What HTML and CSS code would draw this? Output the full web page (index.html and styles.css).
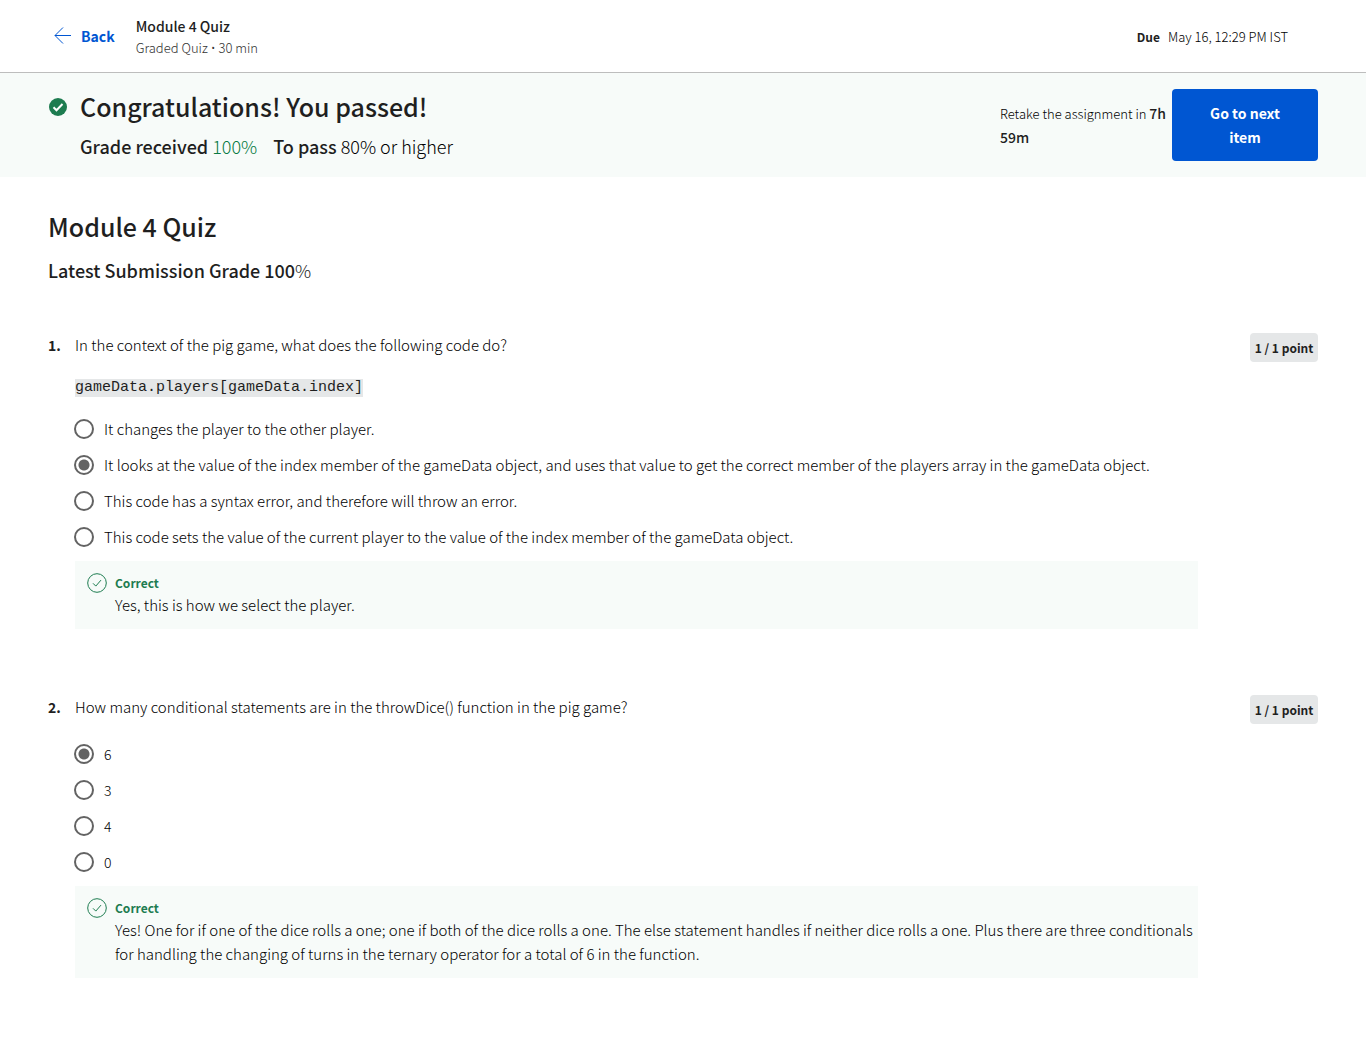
FILE: index.html
```html
<!DOCTYPE html>
<html lang="en">
<head>
<meta charset="utf-8">
<meta name="viewport" content="width=device-width, initial-scale=1">
<title>Module 4 Quiz</title>
<link rel="stylesheet" href="styles.css">
</head>
<body>
<header class="topbar">
  <a class="back" href="#">
    <svg class="back-icon" viewBox="0 0 18 18" aria-hidden="true"><path d="M17 8.5H1M9 .5l-8 8 8 8"/></svg>
    <span>Back</span>
  </a>
  <div class="item-info">
    <div class="item-title">Module 4 Quiz</div>
    <div class="item-meta">Graded Quiz <span class="bullet">•</span> 30 min</div>
  </div>
  <div class="due"><b>Due</b><span>May 16, 12:29 PM IST</span></div>
</header>

<section class="banner">
  <svg class="passed-icon" viewBox="0 0 18 18" aria-hidden="true"><circle cx="9" cy="9" r="9"/><path d="M4.5 9.2l3 3 6-6.2"/></svg>
  <div class="result">
    <h2 class="result-title">Congratulations! You passed!</h2>
    <div class="grades">
      <span><b>Grade received</b> <span class="score">100%</span></span>
      <span><b>To pass</b> 80% or higher</span>
    </div>
  </div>
  <p class="retake">Retake the assignment in <b>7h 59m</b></p>
  <button class="next" type="button">Go to next item</button>
</section>

<main class="quiz">
  <h1 class="quiz-title">Module 4 Quiz</h1>
  <h2 class="quiz-grade">Latest Submission Grade 100<span class="percent">%</span></h2>

  <section class="question">
    <div class="number">1.</div>
    <div class="body">
      <fieldset class="choices">
        <legend class="prompt">In the context of the pig game, what does the following code do?</legend>
        <p class="snippet"><code>gameData.players[gameData.index]</code></p>
        <label class="choice"><input type="radio" name="q1"><span>It changes the player to the other player.</span></label>
        <label class="choice"><input type="radio" name="q1" checked><span>It looks at the value of the index member of the gameData object, and uses that value to get the correct member of the players array in the gameData object.</span></label>
        <label class="choice"><input type="radio" name="q1"><span>This code has a syntax error, and therefore will throw an error.</span></label>
        <label class="choice"><input type="radio" name="q1"><span>This code sets the value of the current player to the value of the index member of the gameData object.</span></label>
      </fieldset>
      <div class="feedback">
        <svg class="correct-icon" viewBox="0 0 20 20" aria-hidden="true"><circle cx="10" cy="10" r="9.3"/><path d="M6 10.3l2.8 2.8 5.2-6"/></svg>
        <div>
          <div class="verdict">Correct</div>
          <p class="explanation">Yes, this is how we select the player.</p>
        </div>
      </div>
    </div>
    <div class="points">1 / 1 point</div>
  </section>

  <section class="question">
    <div class="number">2.</div>
    <div class="body">
      <fieldset class="choices">
        <legend class="prompt">How many conditional statements are in the throwDice() function in the pig game?</legend>
        <label class="choice"><input type="radio" name="q2" checked><span class="short">6</span></label>
        <label class="choice"><input type="radio" name="q2"><span class="short">3</span></label>
        <label class="choice"><input type="radio" name="q2"><span class="short">4</span></label>
        <label class="choice"><input type="radio" name="q2"><span class="short">0</span></label>
      </fieldset>
      <div class="feedback">
        <svg class="correct-icon" viewBox="0 0 20 20" aria-hidden="true"><circle cx="10" cy="10" r="9.3"/><path d="M6 10.3l2.8 2.8 5.2-6"/></svg>
        <div>
          <div class="verdict">Correct</div>
          <p class="explanation">Yes! One for if one of the dice rolls a one; one if both of the dice rolls a one. The else statement handles if neither dice rolls a one. Plus there are three conditionals for handling the changing of turns in the ternary operator for a total of 6 in the function.</p>
        </div>
      </div>
    </div>
    <div class="points">1 / 1 point</div>
  </section>
</main>
</body>
</html>
```

FILE: styles.css
```css
* { box-sizing: border-box; }

body {
  margin: 0;
  background: #fff;
  color: #1f1f1f;
  font: 300 15px/24px "Noto Sans CJK SC", "Noto Sans", sans-serif;
}

h1, h2, p { margin: 0; }

.topbar {
  display: flex;
  align-items: center;
  height: 73px;
  padding: 2px 78px 0 54px;
  border-bottom: 1px solid #bdbdbd;
}

.back {
  display: flex;
  align-items: center;
  gap: 9px;
  margin-right: 21px;
  padding-bottom: 2px;
  color: #0056d2;
  font-size: 14px;
  font-weight: 700;
  text-decoration: none;
}
.back-icon {
  width: 18px;
  height: 18px;
  fill: none;
  stroke: #0056d2;
}

.item-title { font-size: 14px; font-weight: 500; line-height: 22px; }
.item-meta { color: #333; font-size: 13px; line-height: 22px; }
.bullet { font-family: "Open Sans", sans-serif; }

.due {
  display: flex;
  gap: 8px;
  margin-left: auto;
  color: #000;
  font-size: 13px;
}
.due b { color: #1f1f1f; font-size: 12px; font-weight: 700; }

.banner {
  display: flex;
  align-items: flex-start;
  padding: 16px 48px;
  background: #f7fbf9;
}
.passed-icon {
  width: 20px;
  height: 18px;
  margin: 9px 12px 0 0;
  fill: #1d7c50;
}
.passed-icon path { fill: none; stroke: #fff; stroke-width: 2; }
.result { flex: 1; }
.result-title { font-size: 25px; font-weight: 500; line-height: 34px; }
.grades {
  display: flex;
  gap: 16px;
  margin-top: 9px;
  color: #000;
  font-size: 18px;
  line-height: 28px;
}
.grades b { color: #1f1f1f; font-weight: 500; }
.grades .score { color: #087a43; }
.retake { width: 172px; padding-top: 13px; color: #000; font-size: 13px; }
.retake b { color: #1f1f1f; font-size: 14px; font-weight: 500; line-height: 20px; }
.next {
  width: 146px;
  padding: 12px 32px;
  border: 0;
  border-radius: 4px;
  background: #0056d2;
  color: #fff;
  font: inherit;
  font-size: 14px;
  font-weight: 700;
}

.quiz { padding: 32px 48px; }
.quiz-title { font-size: 25px; font-weight: 500; line-height: 34px; }
.quiz-grade { margin: 13px 0 49px; font-size: 18px; font-weight: 500; line-height: 28px; }
.percent { font-weight: 300; }

.question { display: flex; align-items: flex-start; margin-bottom: 66px; }
.number { width: 27px; font-size: 14px; font-weight: 700; }
.body { flex: 1; margin-right: 52px; }
.choices { min-width: 0; margin: 0; padding: 0; border: 0; color: #000; }
.prompt { margin-bottom: 17px; padding: 0; }
.snippet { display: flex; padding: 5px 0 14px; }
.snippet code {
  background: #e5e7e8;
  color: #1f1f1f;
  font: 15px/18px "Liberation Mono", "Courier New", monospace;
}
.choice { display: flex; align-items: center; gap: 10px; min-height: 36px; }
.choice input {
  appearance: none;
  flex: none;
  width: 20px;
  height: 20px;
  margin: 0 0 0 -1px;
  border: 2px solid #636363;
  border-radius: 50%;
}
.choice input:checked { background: radial-gradient(circle, #636363 5px, #fff 6px); }
.short { font-size: 14px; }

.feedback {
  display: flex;
  gap: 8px;
  margin-top: 6px;
  padding: 12px 0 12px 12px;
  background: #f7fbf9;
}
.correct-icon {
  flex: none;
  width: 20px;
  height: 20px;
  fill: none;
  stroke: #1d7c50;
}
.verdict { color: #1d7c50; font-size: 12px; font-weight: 700; line-height: 20px; }
.explanation { color: #000; }

.points {
  width: 68px;
  border-radius: 4px;
  background: #e5e7e8;
  font-size: 12px;
  font-weight: 700;
  line-height: 29px;
  text-align: center;
}
```
